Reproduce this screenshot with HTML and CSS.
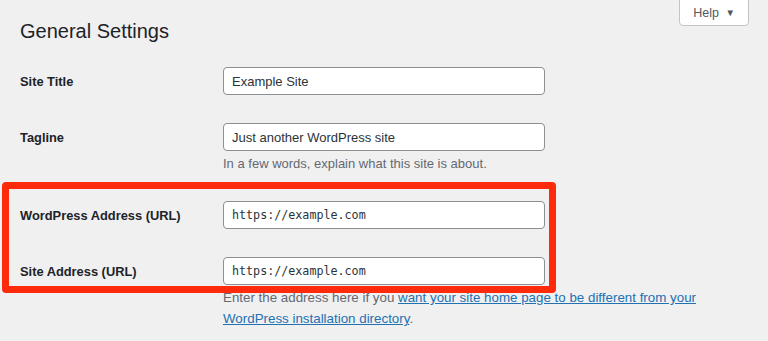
FILE: index.html
```html
<!DOCTYPE html>
<html lang="en">
<head>
    <meta charset="UTF-8">
    <title>General Settings</title>
    <link rel="stylesheet" href="styles.css">
</head>
<body>

    <div class="wrap">
        <button class="help-tab" type="button">Help <span class="arrow">&#9660;</span></button>

        <h1>General Settings</h1>

        <div class="form-table">
            <div class="row">
                <label for="blogname">Site Title</label>
                <div class="field">
                    <input type="text" id="blogname" value="Example Site">
                </div>
            </div>

            <div class="row">
                <label for="blogdescription">Tagline</label>
                <div class="field">
                    <input type="text" id="blogdescription" value="Just another WordPress site">
                    <p class="description">In a few words, explain what this site is about.</p>
                </div>
            </div>

            <div class="highlight">
                <div class="row">
                    <label for="siteurl">WordPress Address (URL)</label>
                    <div class="field">
                        <input type="url" id="siteurl" class="code" value="https://example.com">
                    </div>
                </div>

                <div class="row">
                    <label for="home">Site Address (URL)</label>
                    <div class="field">
                        <input type="url" id="home" class="code" value="https://example.com">
                        <p class="description addr">Enter the address here if you <a href="#">want your site home page to be different from your WordPress installation directory</a>.</p>
                    </div>
                </div>
            </div>
        </div>
    </div>

</body>
</html>
```

FILE: styles.css
```css
* {
    margin: 0;
    padding: 0;
    box-sizing: border-box;
    font-family: 'Liberation Sans', Arial, sans-serif;
}

body, html {
    height: 100%;
    width: 100%;
}

body {
    background-color: #f0f0f1;
    color: #1d2327;
}

.wrap {
    padding: 0 19px 0 20px;
}

.help-tab {
    float: right;
    width: 70px;
    height: 27px;
    margin-top: -1px;
    background-color: #fff;
    border: 1px solid #c3c4c7;
    border-radius: 0 0 4px 4px;
    color: #50575e;
    font-size: 12.5px;
    cursor: pointer;
}

.help-tab .arrow {
    font-size: 9.5px;
    margin-left: 3px;
    position: relative;
    top: -1px;
}

h1 {
    font-size: 20px;
    font-weight: normal;
    line-height: 24px;
    padding-top: 19px;
    margin-bottom: 11px;
}

.row {
    display: grid;
    grid-template-columns: 203px 322px;
    align-items: start;
    padding: 13px 0 14px;
}

.row label {
    font-size: 12.85px;
    font-weight: bold;
    line-height: 28px;
    padding-top: 1px;
}

.field input {
    width: 100%;
    height: 28px;
    padding: 0 8px;
    background-color: #fff;
    border: 1px solid #8c8f94;
    border-radius: 4px;
    color: #2c3338;
    font-size: 13px;
}

.field input.code {
    font-family: 'DejaVu Sans Mono', 'Liberation Mono', monospace;
    font-size: 11.7px;
}

.description {
    margin-top: 3px;
    color: #646970;
    font-size: 13px;
    line-height: 20px;
    white-space: nowrap;
}

.description.addr {
    margin-top: 2px;
    width: 480px;
    font-size: 13.35px;
    white-space: normal;
    line-height: 21px;
}

.description a {
    color: #2271b1;
}

.highlight {
    position: relative;
}

/* red annotation round the two address rows */
.highlight::before {
    content: '';
    position: absolute;
    top: -6px;
    left: -18px;
    width: 554px;
    height: 111px;
    box-sizing: border-box;
    border: 7px solid #fe2a0c;
    border-radius: 4px;
    pointer-events: none;
}
```
